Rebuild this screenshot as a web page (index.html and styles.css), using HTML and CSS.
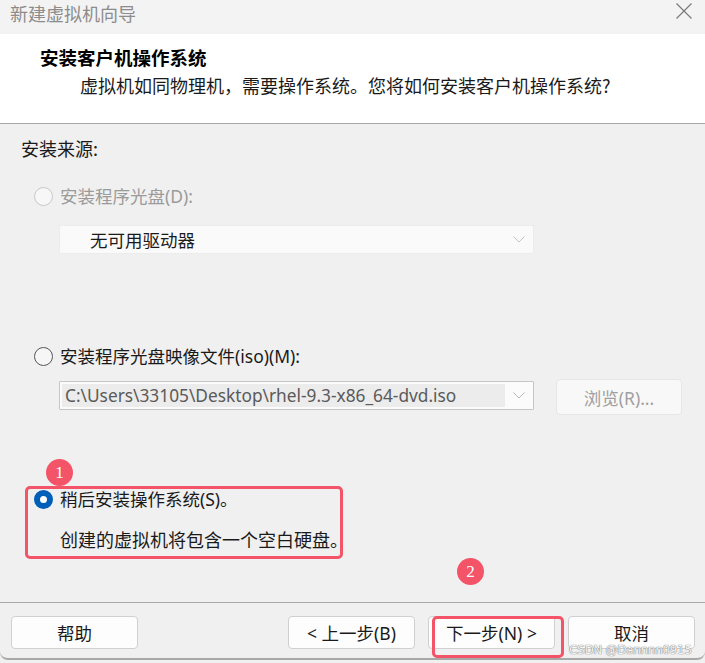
FILE: index.html
```html
<!DOCTYPE html>
<html lang="zh-CN">
<head>
<meta charset="utf-8">
<title>新建虚拟机向导</title>
<link rel="stylesheet" href="styles.css">
</head>
<body>
<div class="window">
  <div class="titlebar">
    <span class="title">新建虚拟机向导</span>
    <svg class="close" width="16" height="16" viewBox="0 0 16 16"><path d="M0.5 0.5 L15.5 15.5 M15.5 0.5 L0.5 15.5" stroke="#7a7a7a" stroke-width="1.2" fill="none"/></svg>
  </div>
  <div class="header">
    <div class="heading">安装客户机操作系统</div>
    <div class="subtext">虚拟机如同物理机，需要操作系统。您将如何安装客户机操作系统?</div>
  </div>
  <div class="content">
    <div class="section-label">安装来源:</div>

    <div class="radio-row row-disc disabled">
      <span class="radio"></span>
      <span class="label">安装程序光盘(D):</span>
    </div>
    <div class="select select-disabled">
      <span class="select-text">无可用驱动器</span>
      <svg class="chev" width="12" height="7" viewBox="0 0 12 7"><path d="M0.5 0.5 L6 6 L11.5 0.5" stroke="#c4c4c4" stroke-width="1" fill="none"/></svg>
    </div>

    <div class="radio-row row-iso">
      <span class="radio"></span>
      <span class="label">安装程序光盘映像文件(iso)(M):</span>
    </div>
    <div class="iso-row">
      <div class="select select-iso">
        <span class="select-field">C:\Users\33105\Desktop\rhel-9.3-x86_64-dvd.iso</span>
        <svg class="chev" width="12" height="7" viewBox="0 0 12 7"><path d="M0.5 0.5 L6 6 L11.5 0.5" stroke="#b8b8b8" stroke-width="1" fill="none"/></svg>
      </div>
      <div class="btn btn-disabled">浏览(R)...</div>
    </div>

    <div class="radio-row row-later">
      <span class="radio checked"></span>
      <span class="label dark">稍后安装操作系统(S)。</span>
    </div>
    <div class="desc">创建的虚拟机将包含一个空白硬盘。</div>
  </div>
  <div class="footer">
    <div class="btn">帮助</div>
    <div class="spacer"></div>
    <div class="btn">&lt; 上一步(B)</div>
    <div class="btn">下一步(N) &gt;</div>
    <div class="btn">取消</div>
  </div>

  <div class="badge badge-1">1</div>
  <div class="badge badge-2">2</div>
  <div class="mark mark-1"></div>
  <div class="mark mark-2"></div>
  <div class="watermark">CSDN @Dannnn0915</div>
</div>
</body>
</html>
```
FILE: styles.css
```css
html, body {
  margin: 0;
  padding: 0;
  background: #f0f0f0;
}
body {
  font-family: "Noto Sans", "Noto Sans CJK SC", sans-serif;
  font-size: 17px;
  color: #1a1a1a;
}
.window {
  position: relative;
  width: 705px;
  height: 663px;
  overflow: hidden;
  background: #f0f0f0;
}
.titlebar {
  height: 34px;
  background: #f3f3f3;
  display: flex;
  align-items: center;
  justify-content: space-between;
  padding: 0 13px 0 10px;
  box-sizing: border-box;
}
.title {
  font-family: "Noto Sans CJK SC", sans-serif;
  font-size: 18px;
  color: #8c8c8c;
  line-height: 24px;
  margin-top: -9px;
}
.close {
  margin-top: -12px;
}
.header {
  height: 90px;
  box-sizing: border-box;
  background: #ffffff;
  border-bottom: 1px solid #a8a8a8;
  padding-top: 11px;
}
.heading {
  font-family: "Noto Sans CJK SC", serif;
  font-weight: 700;
  font-size: 18.5px;
  line-height: 24px;
  padding-left: 40px;
  color: #000;
}
.subtext {
  font-family: "Noto Sans CJK SC", serif;
  font-size: 18px;
  line-height: 24px;
  padding-left: 80px;
  margin-top: 4px;
  color: #1a1a1a;
}
.content {
  height: 478px;
  box-sizing: border-box;
  padding-top: 12px;
  display: flex;
  flex-direction: column;
  align-items: flex-start;
}
.section-label {
  font-family: "Noto Sans CJK SC", sans-serif;
  font-size: 18px;
  line-height: 24px;
  padding-left: 21px;
  color: #1a1a1a;
}
.radio-row {
  display: flex;
  align-items: center;
  height: 24px;
  padding-left: 34px;
}
.row-disc { margin-top: 24px; }
.row-iso { margin-top: 90px; }
.row-later { margin-top: 72px; }
.radio {
  width: 17px;
  height: 17px;
  border-radius: 50%;
  border: 1px solid #555;
  background: #f6f6f6;
  box-sizing: content-box;
  margin-right: 7px;
  flex: none;
}
.disabled .radio {
  border-color: #c8c8c8;
  background: #f7f7f7;
}
.radio.checked {
  border: 6px solid #005fb8;
  width: 7px;
  height: 7px;
  background: #ffffff;
}
.label {
  font-family: "Noto Sans", "Noto Sans CJK SC", sans-serif;
  font-size: 17.5px;
  line-height: 24px;
  color: #1a1a1a;
}
.disabled .label {
  color: #9b9b9b;
}
.select {
  box-sizing: border-box;
  width: 475px;
  height: 29px;
  margin-left: 59px;
  display: flex;
  align-items: center;
  justify-content: space-between;
  padding-right: 8px;
}
.select-disabled {
  margin-top: 17px;
  background: #fafafa;
  border: 1px solid #ececec;
  padding-left: 30px;
}
.select-text {
  font-family: "Noto Sans CJK SC", sans-serif;
  font-size: 17.5px;
  line-height: 24px;
  color: #1a1a1a;
}
.iso-row {
  display: flex;
  align-items: flex-start;
  margin-top: 11px;
}
.select-iso {
  margin-top: 2px;
  background: #fbfbfb;
  border: 1px solid #c6c6c6;
  border-radius: 1px;
  padding: 2px 8px 2px 2px;
  align-items: stretch;
}
.select-field {
  width: 443px;
  background: #ececec;
  font-family: "Noto Sans", sans-serif;
  font-size: 17.3px;
  line-height: 23px;
  color: #5a5a5a;
  padding-left: 3px;
  box-sizing: border-box;
  white-space: nowrap;
  overflow: hidden;
}
.select-iso .chev {
  align-self: center;
}
.btn {
  box-sizing: border-box;
  width: 127px;
  height: 33px;
  border: 1px solid #d0d0d0;
  border-radius: 4px;
  background: #fdfdfd;
  display: flex;
  align-items: center;
  justify-content: center;
  font-family: "Noto Sans", "Noto Sans CJK SC", sans-serif;
  font-size: 17.5px;
  color: #1a1a1a;
  flex: none;
}
.btn-disabled {
  margin-left: 22px;
  width: 126px;
  height: 36px;
  border-color: #e6e6e6;
  background: #f8f8f8;
  color: #a0a0a0;
}
.desc {
  font-family: "Noto Sans CJK SC", sans-serif;
  font-size: 18px;
  line-height: 24px;
  padding-left: 60px;
  margin-top: 16px;
  color: #1a1a1a;
}
.footer {
  height: 58px;
  box-sizing: border-box;
  border-top: 1px solid #a8a8a8;
  border-bottom: 2px solid #a8a8a8;
  border-radius: 0 0 8px 8px;
  display: flex;
  align-items: flex-start;
  padding: 13px 10px 0 11px;
  gap: 13px;
}
.footer .spacer {
  flex: 1;
}
.badge {
  position: absolute;
  width: 27px;
  height: 27px;
  border-radius: 50%;
  background: #f35468;
  color: #fff;
  font-family: "Liberation Serif", serif;
  font-size: 17px;
  line-height: 27px;
  text-align: center;
}
.badge-1 { left: 46px; top: 459px; }
.badge-2 { left: 457px; top: 558px; }
.mark {
  position: absolute;
  border: 3px solid #f35468;
  border-radius: 5px;
  box-sizing: border-box;
}
.mark-1 { left: 25px; top: 486px; width: 318px; height: 73px; }
.mark-2 { left: 432px; top: 616px; width: 132px; height: 42px; }
.watermark {
  position: absolute;
  left: 569px;
  top: 642px;
  font-family: "DejaVu Sans", sans-serif;
  font-size: 12px;
  line-height: 16px;
  color: #f4f4f4;
  text-shadow: 0 0 1px #7a7a7a, 0 0 1px #7a7a7a;
  letter-spacing: -0.3px;
}
```
